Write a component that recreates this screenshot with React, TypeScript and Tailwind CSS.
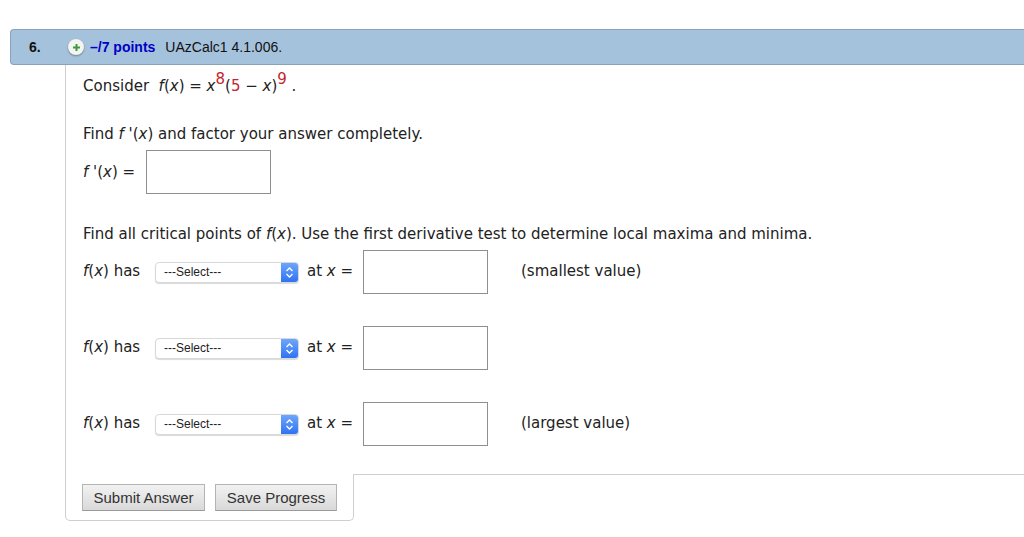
function Var({ children }: { children: string }) {
  return <i>{children}</i>
}

function Fx() {
  return (
    <span>
      <Var>f</Var>(<Var>x</Var>)
    </span>
  )
}

function Sup({ children }: { children: string }) {
  return <span className="relative top-[-7px] text-[#c4262e]">{children}</span>
}

function AnswerBox() {
  return <input type="text" className="h-[44px] w-[125px] shrink-0 border border-[#8f8f8f] bg-white" />
}

function SelectBox() {
  return (
    <div className="flex h-[21px] w-[144px] shrink-0 overflow-hidden rounded-[4px] border border-[#d8d8d8] bg-white shadow-[0_1px_1px_rgba(0,0,0,0.15)]">
      <span className="flex-1 pl-[8px] font-['Liberation_Sans',sans-serif] text-[12px] leading-[19px] text-[#222]">
        ---Select---
      </span>
      <span className="flex w-[17px] items-center justify-center bg-gradient-to-b from-[#6ea6fb] to-[#2f72f2]">
        <svg width="9" height="13" viewBox="0 0 9 13" fill="none" stroke="white" strokeWidth="1.4">
          <path d="M1.5 5 L4.5 2 L7.5 5" />
          <path d="M1.5 8 L4.5 11 L7.5 8" />
        </svg>
      </span>
    </div>
  )
}

function CriticalRow({ note, className }: { note?: string; className?: string }) {
  return (
    <div className={`flex h-[44px] items-center ${className ?? ''}`}>
      <span className="relative top-[-1px] w-[72px] shrink-0">
        <Fx /> has
      </span>
      <SelectBox />
      <span className="relative top-[-1px] w-[64px] shrink-0 pl-[8px]">
        at <Var>x</Var> =
      </span>
      <AnswerBox />
      {note ? <span className="relative top-[-1px] ml-[33px]">{note}</span> : null}
    </div>
  )
}

function FooterButton({ label, className }: { label: string; className: string }) {
  return (
    <button
      type="button"
      className={`h-[27px] border border-[#b4b4b4] border-b-[#9a9a9a] bg-gradient-to-b from-[#f2f2f2] to-[#d9d9d9] text-center font-['Liberation_Sans',sans-serif] text-[15px] leading-[25px] text-[#333] ${className}`}
    >
      {label}
    </button>
  )
}

export default function App() {
  return (
    <div className="h-[537px] w-[1024px] overflow-hidden bg-white pl-[10px] pt-[29px] font-['DejaVu_Sans',Verdana,sans-serif] text-[15px] leading-[24px] text-[#222]">
      <header className="flex h-[36px] items-center rounded-l-[4px] border border-r-0 border-[#8ba3ba] bg-[#a5c2dc] font-['Liberation_Sans',sans-serif] text-[14px] text-[#111]">
        <span className="w-[57px] pl-[18px] font-bold">6.</span>
        <span className="flex h-[16px] w-[16px] items-center justify-center rounded-full bg-[#f4f4f0] shadow-[0_1px_2px_rgba(0,0,0,0.35)]">
          <svg width="9" height="9" viewBox="0 0 9 9">
            <path d="M3.5 1h2v2.5H8v2H5.5V8h-2V5.5H1v-2h2.5z" fill="#3f9a3f" />
          </svg>
        </span>
        <span className="ml-[6px] font-bold text-[#0000c4]">–/7 points</span>
        <span className="ml-[10px]">UAzCalc1 4.1.006.</span>
      </header>

      <div className="ml-[55px]">
        <main className="border-l border-[#cfcfcf] pb-[28px] pl-[17px] pt-[9px]">
          <p className="whitespace-pre">
            Consider  <Fx /> = <Var>x</Var>
            <Sup>8</Sup>(<span className="text-[#c4262e]">5</span> − <Var>x</Var>)<Sup>9</Sup> .
          </p>
          <p className="mt-[24px]">
            Find <Var>f</Var> '(<Var>x</Var>) and factor your answer completely.
          </p>
          <div className="mt-[4px] flex h-[44px] items-center">
            <span className="w-[63px] shrink-0">
              <Var>f</Var> '(<Var>x</Var>) =
            </span>
            <AnswerBox />
          </div>
          <p className="mt-[28px]">
            Find all critical points of <Fx />. Use the first derivative test to determine local maxima and minima.
          </p>
          <CriticalRow className="mt-[4px]" note="(smallest value)" />
          <CriticalRow className="mt-[32px]" />
          <CriticalRow className="mt-[32px]" note="(largest value)" />
        </main>

        <div className="flex">
          <div className="flex h-[47px] w-[289px] shrink-0 items-start gap-[10px] rounded-b-[5px] border border-t-0 border-[#cfcfcf] pl-[16px] pt-[10px]">
            <FooterButton label="Submit Answer" className="w-[123px]" />
            <FooterButton label="Save Progress" className="w-[122px]" />
          </div>
          <div className="h-[10px] flex-1 border-t border-[#cfcfcf]" />
        </div>
      </div>
    </div>
  )
}
